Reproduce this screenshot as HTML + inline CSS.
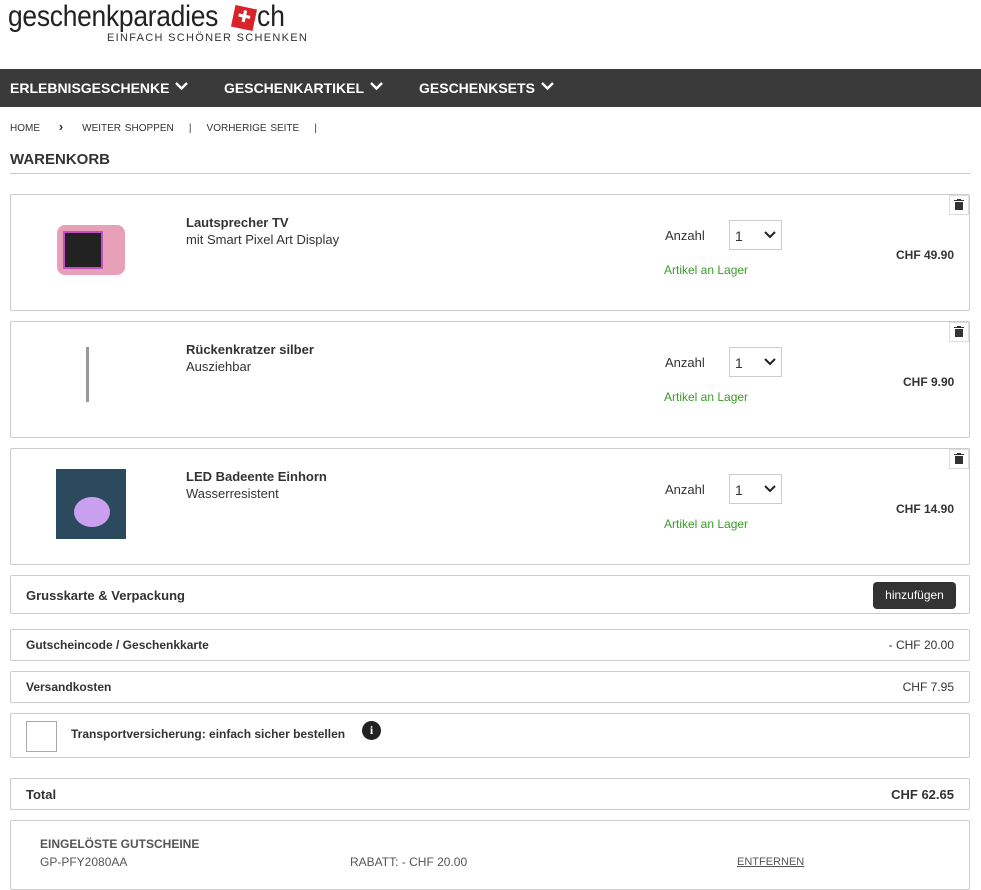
<!DOCTYPE html>
<html><head><meta charset="utf-8"><style>
*{box-sizing:border-box;margin:0;padding:0}
body{width:981px;height:878px;overflow:hidden;background:#fff;font-family:"Liberation Sans",sans-serif;color:#333;position:relative}
.a{position:absolute}
.box{position:absolute;left:10px;width:960px;border:1px solid #ccc;border-radius:2px;background:#fff}
.b{font-weight:bold}
.sel{position:absolute;left:729px;width:53px;height:30px;border:1px solid #ccc;font-size:14px;padding:7px 5px}
.sel svg{position:absolute;right:5px;top:10px}
.trash{position:absolute;right:0;top:0;width:20px;height:20px;border:1px solid #ddd;background:#fff}
.grn{color:#3a9a2a;font-size:12px}
.s13{font-size:13px}
.nv{position:absolute;top:11px}
.nv svg{margin-left:6px;vertical-align:2px}
</style></head><body>
<div class="a" style="left:8px;top:0px;font-size:30px;color:#222;transform:scaleX(0.88);transform-origin:0 0;letter-spacing:-0.3px">geschenkparadies</div>
<div class="a" style="left:233px;top:7px;width:22px;height:22px;background:#d8232a;transform:rotate(12deg);color:#fff;font-size:16px;text-align:center;line-height:22px">✚</div>
<div class="a" style="left:257px;top:0px;font-size:30px;color:#222;transform:scaleX(0.88);transform-origin:0 0">ch</div>
<div class="a" style="left:107px;top:32px;font-size:11px;letter-spacing:1.3px;color:#333">EINFACH SCHÖNER SCHENKEN</div>
<div class="a" style="left:0;top:69px;width:981px;height:38px;background:#3a3a3a;color:#fff;font-size:14px;font-weight:bold">
<span class="nv" style="left:10px">ERLEBNISGESCHENKE<svg width="13" height="9"><path d="M1 1l5.5 5.5L12 1" stroke="#fff" stroke-width="2.4" fill="none"/></svg></span>
<span class="nv" style="left:224px">GESCHENKARTIKEL<svg width="13" height="9"><path d="M1 1l5.5 5.5L12 1" stroke="#fff" stroke-width="2.4" fill="none"/></svg></span>
<span class="nv" style="left:419px">GESCHENKSETS<svg width="13" height="9"><path d="M1 1l5.5 5.5L12 1" stroke="#fff" stroke-width="2.4" fill="none"/></svg></span></div>
<div class="a" style="left:10px;top:119px;font-size:10px;color:#333;word-spacing:1px">HOME &nbsp;&nbsp;&nbsp;&nbsp;<b style="font-size:13px">›</b>&nbsp;&nbsp;&nbsp;&nbsp; WEITER SHOPPEN &nbsp;&nbsp; | &nbsp;&nbsp; VORHERIGE SEITE &nbsp;&nbsp; |</div>
<div class="a b" style="left:10px;top:151px;font-size:15px">WARENKORB</div>
<div class="a" style="left:10px;top:173px;width:960px;height:1px;background:#ccc"></div>

<div class="box" style="top:194px;height:117px"><div class="trash"><svg width="18" height="18" viewBox="0 0 18 18"><path d="M5 6h8v8H5z M4 4h10v1H4z M7 3h4v1H7z" fill="#333"/></svg></div>
<div class="a" style="left:46px;top:30px;width:68px;height:50px;background:#e8a0b8;border-radius:8px"><div style="margin:6px;width:40px;height:38px;background:#222;border:2px solid #c050c0"></div></div>
<div class="a b s13" style="left:175px;top:20px">Lautsprecher TV</div><div class="a s13" style="left:175px;top:37px">mit Smart Pixel Art Display</div>
<div class="a s13" style="left:654px;top:33px">Anzahl</div></div>
<div class="box" style="top:321px;height:117px"><div class="trash"><svg width="18" height="18" viewBox="0 0 18 18"><path d="M5 6h8v8H5z M4 4h10v1H4z M7 3h4v1H7z" fill="#333"/></svg></div>
<div class="a" style="left:75px;top:25px;width:3px;height:55px;background:#999"></div>
<div class="a b s13" style="left:175px;top:20px">Rückenkratzer silber</div><div class="a s13" style="left:175px;top:37px">Ausziehbar</div>
<div class="a s13" style="left:654px;top:33px">Anzahl</div></div>
<div class="box" style="top:448px;height:117px"><div class="trash"><svg width="18" height="18" viewBox="0 0 18 18"><path d="M5 6h8v8H5z M4 4h10v1H4z M7 3h4v1H7z" fill="#333"/></svg></div>
<div class="a" style="left:45px;top:20px;width:70px;height:70px;background:#2c4a5e"><div style="margin:28px 0 0 18px;width:36px;height:30px;border-radius:50%;background:#c9a0f0"></div></div>
<div class="a b s13" style="left:175px;top:20px">LED Badeente Einhorn</div><div class="a s13" style="left:175px;top:37px">Wasserresistent</div>
<div class="a s13" style="left:654px;top:33px">Anzahl</div></div>

<div class="sel" style="top:220px">1<svg width="12" height="8"><path d="M1 1l5 5 5-5" stroke="#222" stroke-width="2" fill="none"/></svg></div>
<div class="sel" style="top:347px">1<svg width="12" height="8"><path d="M1 1l5 5 5-5" stroke="#222" stroke-width="2" fill="none"/></svg></div>
<div class="sel" style="top:474px">1<svg width="12" height="8"><path d="M1 1l5 5 5-5" stroke="#222" stroke-width="2" fill="none"/></svg></div>
<div class="a grn" style="left:664px;top:263px">Artikel an Lager</div>
<div class="a grn" style="left:664px;top:390px">Artikel an Lager</div>
<div class="a grn" style="left:664px;top:517px">Artikel an Lager</div>
<div class="a b" style="left:896px;top:248px;font-size:12px">CHF 49.90</div>
<div class="a b" style="left:903px;top:375px;font-size:12px">CHF 9.90</div>
<div class="a b" style="left:896px;top:502px;font-size:12px">CHF 14.90</div>

<div class="box" style="top:575px;height:39px"><div class="a b s13" style="left:15px;top:12px">Grusskarte &amp; Verpackung</div>
<div class="a" style="left:862px;top:6px;width:83px;height:27px;background:#333;color:#fff;border-radius:4px;font-size:12px;text-align:center;line-height:27px">hinzufügen</div></div>
<div class="box" style="top:629px;height:32px"><div class="a b" style="left:15px;top:8px;font-size:12px">Gutscheincode / Geschenkkarte</div><div class="a" style="right:15px;top:8px;font-size:12px">- CHF 20.00</div></div>
<div class="box" style="top:671px;height:32px"><div class="a b" style="left:15px;top:8px;font-size:12px">Versandkosten</div><div class="a" style="right:15px;top:8px;font-size:12px">CHF 7.95</div></div>
<div class="box" style="top:713px;height:45px"><div class="a" style="left:15px;top:7px;width:31px;height:31px;border:1px solid #aaa"></div>
<div class="a b" style="left:60px;top:13px;font-size:12px">Transportversicherung: einfach sicher bestellen</div>
<div class="a" style="left:351px;top:7px;width:19px;height:19px;border-radius:50%;background:#222;color:#fff;font-size:12px;font-weight:bold;text-align:center;line-height:19px;font-family:'Liberation Serif',serif">i</div></div>
<div class="box" style="top:778px;height:32px"><div class="a b s13" style="left:15px;top:8px">Total</div><div class="a b s13" style="right:15px;top:8px">CHF 62.65</div></div>
<div class="box" style="top:820px;height:70px;color:#555"><div class="a b" style="left:29px;top:16px;font-size:12px">EINGELÖSTE GUTSCHEINE</div>
<div class="a" style="left:29px;top:34px;font-size:12px">GP-PFY2080AA</div>
<div class="a" style="left:339px;top:34px;font-size:12px">RABATT: - CHF 20.00</div>
<div class="a" style="left:726px;top:35px;font-size:11px;text-decoration:underline">ENTFERNEN</div></div>
</body></html>
